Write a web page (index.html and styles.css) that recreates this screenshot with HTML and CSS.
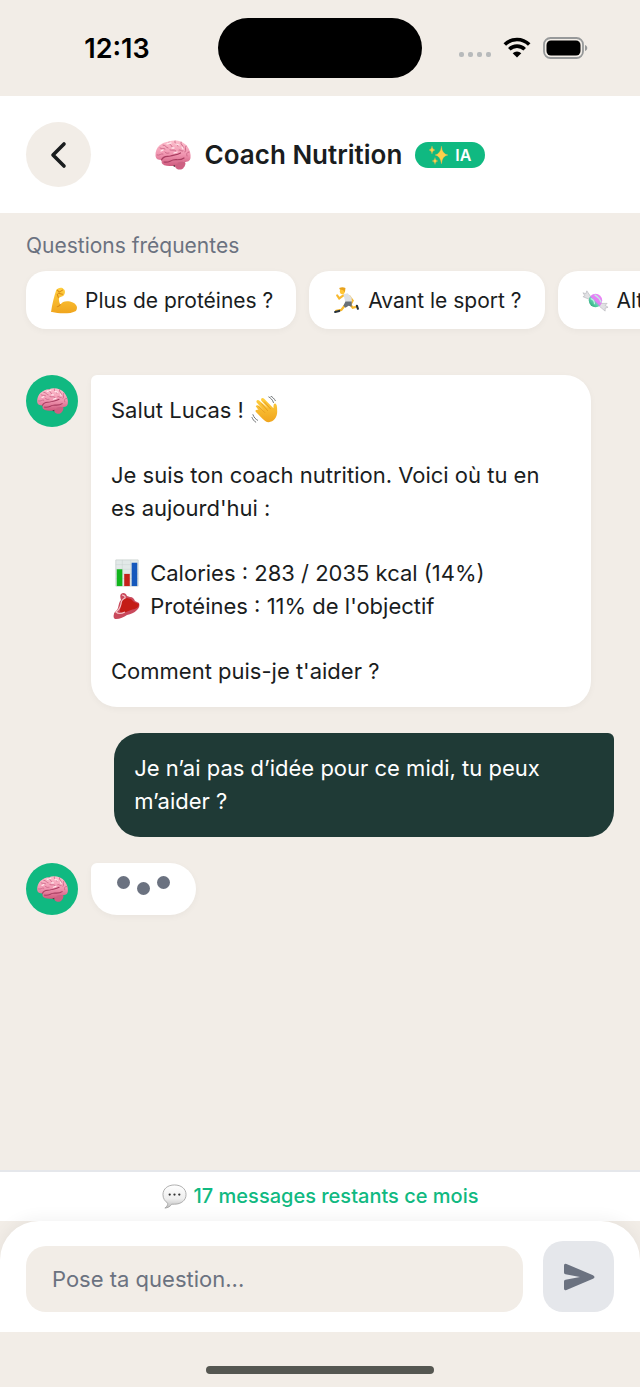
FILE: index.html
```html
<!DOCTYPE html>
<html lang="fr">
<head>
<meta charset="utf-8">
<meta name="viewport" content="width=device-width, initial-scale=1">
<title>Coach Nutrition</title>
<link rel="stylesheet" href="styles.css">
</head>
<body>
<svg class="sprite" aria-hidden="true">
  <defs>
    <linearGradient id="pink" x1="0" y1="0" x2="0" y2="1"><stop offset="0" stop-color="#fdc0cd"/><stop offset=".55" stop-color="#f095b0"/><stop offset="1" stop-color="#cf5a7e"/></linearGradient>
    <linearGradient id="gold" x1="0" y1="0" x2="0" y2="1"><stop offset="0" stop-color="#ffcf3f"/><stop offset="1" stop-color="#f0a51e"/></linearGradient>
    <linearGradient id="grey" x1="0" y1="0" x2="0" y2="1"><stop offset="0" stop-color="#ffffff"/><stop offset=".6" stop-color="#eeeeee"/><stop offset="1" stop-color="#bdbdbd"/></linearGradient>
    <linearGradient id="sweet" x1="0" y1="1" x2="1" y2="0"><stop offset="0" stop-color="#1f9a68"/><stop offset=".4" stop-color="#5fd3b0"/><stop offset=".5" stop-color="#e27df5"/><stop offset="1" stop-color="#ee8bf8"/></linearGradient>
  </defs>
  <symbol id="brain" viewBox="0 0 36 32">
    <path d="M12 24l8 4 3-5z" fill="#4a2f38"/>
    <path d="M20 25c0-3 4-4 8-3 3 1 3 4 1 6-1 3-5 3-7 2-2-1-2-3-2-5z" fill="#cf5f82"/>
    <path d="M.5 17C0 8 7 3 14 2.500 20 0 28 2 32 7c3 4 4 8 3.500 12-.500 3-3 4-6 4-5-1-7 3-12 4-4 0-8 0-10-2C6 24 7 22 6.500 21 3 21 1 20 .5 17z" fill="url(#pink)"/>
    <g fill="none" stroke="#c86484" stroke-width=".9" stroke-linecap="round">
      <path d="M2 16c3 1 4-2 6-1M5 9c2 1 3 0 5 1M8 6c3 0 3 3 5 3M14 3c-1 3 3 2 3 5M20 2c-1 3 3 3 3 5M26 3c-1 3 3 3 2 6M31 7c-2 2 1 4-1 6M34 13c-2 0-3 2-2 4M15 11c2 1 4-1 6 1M24 11c2-1 2 2 4 1M10 13c1 2 3 1 4 1"/>
      <path d="M23 24c2-1 4-1 7 0M22 27c3-1 5-1 7 0"/>
    </g>
    <path d="M6.500 21c2-5 6-3 9-4s7-1 10-3M9 23c4 1 6-1 9-2s7 1 11-2" fill="none" stroke="#a83d60" stroke-width="1.200" stroke-linecap="round"/>
    <path d="M12 5c2-1 3-1 4-1M21 5l3 1M6 12l2-1M17 9h2M27 8l1 2M19 14l3-1" stroke="#ffe8ec" stroke-width="1.300" stroke-linecap="round" fill="none"/>
  </symbol>
  <symbol id="sparkles" viewBox="0 0 20 20">
    <path d="M12.500 1Q13 9 19 10Q13 11 12.500 19Q11.500 11 6 10Q11.500 9 12.500 1zM3 1Q3.400 4.600 6 5Q3.400 5.500 3 9Q2.600 5.500 0 5Q2.600 4.600 3 1zM6 12.500Q6.400 15.600 9 16Q6.400 16.400 6 19.500Q5.600 16.400 3 16Q5.600 15.600 6 12.500z" fill="#ffd04a" stroke="#f5a947" stroke-width=".3"/>
  </symbol>
  <symbol id="arm" viewBox="0 0 26 26">
    <path d="M1 24C2 17 4 9 6 3c1-2 4-3 6-2l2 2c1 2 0 5-2 6l-3 1c-1 2 0 5 1 7 2-4 8-4 12-2 4 2 5 5 3 8-5 3-16 3-23 1z" fill="url(#gold)"/>
    <path d="M7 3l2 2 3-2M8 6l4 1M8 10l-1-3M10 17c-1 1-2 2-3 2" fill="none" stroke="#d98a16" stroke-width="1" stroke-linecap="round"/>
  </symbol>
  <symbol id="runner" viewBox="0 0 24 26">
    <path d="M9 8L5 11 3 8M15 9l3 4-2 4" fill="none" stroke="#f8b92e" stroke-width="2" stroke-linecap="round"/>
    <path d="M11 17l-4 5-5 1M15 16l3 4 4-1" fill="none" stroke="#f8b92e" stroke-width="2.200" stroke-linecap="round"/>
    <path d="M9 7l4-1 4 4 0 5-6 0z" fill="#dde0e3"/>
    <path d="M11 14l6 0 0 5-3-1-3 2-2-2z" fill="#687078"/>
    <ellipse cx="8" cy="4" rx="2.400" ry="2.900" fill="#ffc533"/><path d="M5 1q3-1.500 6 0l-.500 4-2-2-3-.500z" fill="#e8a21c"/>
    <path d="M1 24l4-1M22 18l1 3" stroke="#25303a" stroke-width="2" stroke-linecap="round"/>
  </symbol>
  <symbol id="candy" viewBox="0 0 28 24">
    <path d="M9 8L5 2 4 5 1 4l2 3-2 1 7 3zM20 15l6 0-2 2 3 2-3 1v3l-6-5z" fill="#e1e1e4" stroke="#b8b8be" stroke-width=".7"/>
    <circle cx="14" cy="12" r="7" fill="url(#sweet)"/><path d="M9 10q4 1 4 6M13 6q5 3 7 8" fill="none" stroke="#bdf0df" stroke-width="1.200"/>
  </symbol>
  <symbol id="wave" viewBox="0 0 30 30">
    <path d="M4 11c1-2 3-1 4 0l5 5-8-9c-1-2 1-4 3-2l9 8-7-8c-1-2 1-4 3-2l10 10c0-3 0-5 2-5 2 1 2 5 2 9 0 6-4 11-9 11-3 0-5-2-7-4l-7-7c-1-2 1-3 3-2z" fill="url(#gold)"/>
    <path d="M7 11l7 7M10 8l7 8M13 6l7 8" stroke="#e3981d" stroke-width=".9" fill="none"/>
    <path d="M18 1c2 1 4 3 5 6M20 0c2 1 4 3 5 5M1 20c1 3 3 5 5 6M0 23c1 2 2 4 4 5" stroke="#666b6d" stroke-width="1" fill="none" stroke-linecap="round"/>
  </symbol>
  <symbol id="chart" viewBox="0 0 26 30">
    <path d="M1 1h24v28H1z" fill="#e2e9e8" stroke="#cfd6d4"/><path d="M1 6h24M1 11h24M1 16h24M1 21h24M8 1v28M17 1v28" stroke="#c7d2cf" stroke-width=".5"/>
    <path d="M2 11h6v18H2z" fill="#12b51d"/><path d="M10 16h6v13h-6z" fill="#c5221b"/><path d="M18 4h6v25h-6z" fill="#1558bc"/>
  </symbol>
  <symbol id="meat" viewBox="0 0 28 28">
    <path d="M8 2c2-2 5-1 6 2l3 1c3 0 4 2 5 4l4 2c1 3 0 5-2 7-3 3-6 4-10 5-3 2-7 4-11 4-2 0-3-2-2-5 0-2 3-3 4-6 1-4 1-6 3-8-1-3-1-5 0-6z" fill="#c9495c"/>
    <path d="M9 8l5-2 4 1 3 3 5 2c0 4-4 5-8 6-4 1-6 3-9 3-3-1-2-4-1-6 0-3 0-5 1-7z" fill="#c41c16"/>
    <path d="M9 3q4 1 3 3-4 2-4 6-1 5-5 8 3 3 9 0" fill="none" stroke="#f5c4c6" stroke-width="1.200"/>
  </symbol>
  <symbol id="speech" viewBox="0 0 26 26">
    <path d="M13 1c7 0 12 4 12 10s-5 10-12 10h-3c-1 2-4 4-7 4 2-1 3-3 3-5-3-2-5-5-5-9C1 5 6 1 13 1z" fill="url(#grey)" stroke="#a4a4a4" stroke-width=".9"/>
    <circle cx="8" cy="11" r="1.200" fill="#333"/><circle cx="13" cy="11" r="1.200" fill="#333"/><circle cx="18" cy="11" r="1.200" fill="#333"/>
  </symbol>
</svg>

<div class="app">
  <div class="status">
    <span class="status-time">12:13</span>
    <span class="island"></span>
    <span class="status-icons">
      <svg width="32" height="22" viewBox="0 0 32 22" fill="#b8babb"><rect x="0" y="15" width="5" height="5" rx="2"/><rect x="9" y="15" width="5" height="5" rx="2"/><rect x="18" y="15" width="5" height="5" rx="2"/><rect x="27" y="15" width="5" height="5" rx="2"/></svg>
      <svg width="28" height="22" viewBox="0 0 28 22"><path d="M1.800 7.500a17.300 17.300 0 0 1 24.400 0M6.300 12.300a10.900 10.900 0 0 1 15.400 0" fill="none" stroke="#000" stroke-width="3.600"/><path d="M14 20.500l-4.300-4.200a6 6 0 0 1 8.600 0z"/></svg>
      <svg width="45" height="22" viewBox="0 0 45 22"><rect x="1" y="1" width="39" height="20" rx="6.500" fill="none" stroke="#97999a" stroke-width="1.800"/><rect x="3.500" y="3.500" width="34" height="15" rx="4.500"/><path d="M42 8c3 1 3 5 0 6z" fill="#97999a"/></svg>
    </span>
  </div>

  <header class="header">
    <button class="back" type="button" aria-label="Retour"><svg width="20" height="28" viewBox="0 0 20 28"><path d="M15 3L4 14l11 11" fill="none" stroke="#1a1d1e" stroke-width="3.600" stroke-linecap="round" stroke-linejoin="round"/></svg></button>
    <div class="heading">
      <svg class="heading-icon"><use href="#brain"/></svg>
      <h1 class="title">Coach Nutrition</h1>
      <span class="badge"><svg class="badge-icon"><use href="#sparkles"/></svg>IA</span>
    </div>
  </header>

  <section class="faq">
    <h2 class="faq-title">Questions fréquentes</h2>
    <div class="chips">
      <button class="chip" type="button"><svg class="emoji"><use href="#arm"/></svg>Plus de protéines ?</button>
      <button class="chip" type="button"><svg class="emoji"><use href="#runner"/></svg>Avant le sport ?</button>
      <button class="chip" type="button"><svg class="emoji"><use href="#candy"/></svg>Alternatives ?</button>
    </div>
  </section>

  <main class="chat">
    <div class="row">
      <span class="avatar"><svg class="avatar-icon"><use href="#brain"/></svg></span>
      <div class="bubble bubble-bot">
        <p>Salut Lucas ! <svg class="emoji emoji-text"><use href="#wave"/></svg></p>
        <p>Je suis ton coach nutrition. Voici où tu en es aujourd'hui :</p>
        <p><svg class="emoji emoji-text"><use href="#chart"/></svg> Calories : 283 / 2035 kcal (14%)<br><svg class="emoji emoji-text"><use href="#meat"/></svg> Protéines : 11% de l'objectif</p>
        <p>Comment puis-je t'aider ?</p>
      </div>
    </div>
    <div class="row row-user">
      <div class="bubble bubble-user"><p>Je n’ai pas d’idée pour ce midi, tu peux m’aider ?</p></div>
    </div>
    <div class="row">
      <span class="avatar"><svg class="avatar-icon"><use href="#brain"/></svg></span>
      <div class="typing" role="status" aria-label="Le coach écrit"><span class="dot"></span><span class="dot dot-low"></span><span class="dot"></span></div>
    </div>
  </main>

  <p class="quota"><svg class="quota-icon"><use href="#speech"/></svg>17 messages restants ce mois</p>
  <form class="composer">
    <input class="field" type="text" placeholder="Pose ta question..." aria-label="Pose ta question">
    <button class="send" type="button" aria-label="Envoyer"><svg width="32" height="28" viewBox="0 0 32 28"><path d="M1 2.500Q1 0 3.500 1L30 12.200Q33 14 30 15.800L3.500 27Q1 28 1 25.500V18.500Q1 17 2.500 16.700L17 14 2.500 11.300Q1 11 1 9.500z" fill="#6b7280"/></svg></button>
  </form>
  <div class="home"><span class="home-bar"></span></div>
</div>
</body>
</html>
```
FILE: styles.css
```css
* { box-sizing: border-box; }

body {
  margin: 0;
  background: #f2ede7;
  color: #1a1d1e;
  font-family: Inter, "Liberation Sans", sans-serif;
  font-size: 22px;
  line-height: 33px;
}

h1, h2, p { margin: 0; }
button, input { font: inherit; color: inherit; border: 0; }
button { padding: 0; cursor: pointer; }
svg { display: block; flex: none; }
.sprite { position: absolute; width: 0; height: 0; }

.app {
  display: flex;
  flex-direction: column;
  min-height: 100vh;
  overflow: hidden;
}

.status {
  display: grid;
  grid-template-columns: 1fr 204px 1fr;
  align-items: center;
  height: 96px;
}
.status-time {
  justify-self: center;
  padding-left: 16px;
  color: #000;
  font-size: 27px;
  font-weight: 600;
}
.island { height: 60px; border-radius: 30px; background: #000; }
.status-icons {
  display: flex;
  justify-content: center;
  gap: 12px;
  padding-right: 16px;
}

.header {
  display: grid;
  grid-template-columns: 65px 1fr 65px;
  align-items: center;
  padding: 26px;
  background: #fff;
}
.back {
  display: grid;
  place-items: center;
  width: 65px;
  height: 65px;
  border-radius: 50%;
  background: #f2ede7;
}
.heading { display: flex; align-items: center; justify-content: center; }
.heading-icon { width: 36px; height: 32px; margin-right: 14px; }
.title { font-size: 26px; font-weight: 600; white-space: nowrap; }
.badge {
  display: flex;
  align-items: center;
  gap: 6px;
  margin-left: 13px;
  padding: 0 14px;
  border-radius: 13px;
  background: #10b981;
  color: #fff;
  font-size: 16px;
  font-weight: 600;
  line-height: 26px;
}
.badge-icon { width: 20px; height: 20px; }

.faq { padding-top: 20px; }
.faq-title {
  padding: 0 26px;
  color: #6b7280;
  font-size: 21px;
  font-weight: 400;
  line-height: 26px;
}
.chips {
  display: flex;
  gap: 13px;
  padding: 12px 26px 26px;
  overflow-x: auto;
  scrollbar-width: none;
}
.chip {
  display: flex;
  flex: none;
  align-items: center;
  gap: 8px;
  height: 58px;
  padding: 0 23px 0 24px;
  border-radius: 20px;
  background: #fff;
  box-shadow: 0 2px 7px rgb(0 0 0 / 4%);
  font-size: 21px;
}
.emoji { width: 27px; height: 27px; }
.emoji-text {
  display: inline-block;
  width: 30px;
  height: 28px;
  margin: 0 2px 0 1px;
  vertical-align: -6px;
}

.chat {
  display: flex;
  flex: 1;
  flex-direction: column;
  gap: 26px;
  padding: 20px 26px 26px;
}
.row { display: flex; align-items: flex-start; gap: 13px; }
.row-user { justify-content: flex-end; }
.avatar {
  display: grid;
  flex: none;
  place-items: center;
  width: 52px;
  height: 52px;
  border-radius: 50%;
  background: #10b981;
}
.avatar-icon { width: 33px; height: 28px; }
.bubble {
  display: flex;
  flex-direction: column;
  gap: 32px;
  max-width: 85%;
  padding: 19px 24px 19px 20px;
  border-radius: 26px;
}
.bubble-bot { border-top-left-radius: 6px; background: #fff; box-shadow: 0 2px 7px rgb(0 0 0 / 4%); }
.bubble-user { border-top-right-radius: 6px; background: #1f3a36; color: #fff; }
.typing {
  display: flex;
  gap: 7px;
  height: 52px;
  padding: 13px 26px;
  border-radius: 6px 26px 26px 26px;
  background: #fff;
  box-shadow: 0 2px 7px rgb(0 0 0 / 4%);
}
.dot { width: 13px; height: 13px; border-radius: 50%; background: #6b7280; }
.dot-low { margin-top: 6px; }

.quota {
  display: flex;
  align-items: center;
  justify-content: center;
  gap: 7px;
  padding: 8px 26px;
  border-top: 2px solid #e5e7eb;
  background: #fff;
  color: #10b981;
  font-size: 20px;
  font-weight: 500;
}
.quota-icon { width: 25px; height: 25px; }

.composer {
  display: flex;
  align-items: flex-end;
  gap: 20px;
  padding: 20px 26px;
  border-radius: 39px 39px 0 0;
  background: #fff;
  box-shadow: 0 -3px 16px rgb(0 0 0 / 5%);
}
.field {
  flex: 1;
  min-width: 0;
  height: 66px;
  padding: 0 26px;
  border-radius: 20px;
  background: #f2ede7;
}
.field::placeholder { color: #6b7280; opacity: 1; }
.send {
  display: grid;
  place-items: center;
  width: 71px;
  height: 71px;
  border-radius: 20px;
  background: #e5e7eb;
}

.home {
  display: flex;
  align-items: flex-end;
  justify-content: center;
  height: 55px;
  padding-bottom: 13px;
  background: #f2ede7;
}
.home-bar { width: 228px; height: 8px; border-radius: 4px; background: #555751; }
```
